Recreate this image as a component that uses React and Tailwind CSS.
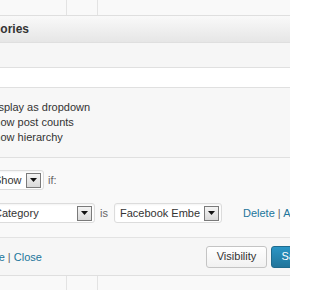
const font = { fontFamily: '"Liberation Sans", Arial, sans-serif' };

function Arrow() {
  return (
    <span className="flex h-[15px] w-[15px] shrink-0 items-center justify-center border border-[#7a7a7a] bg-gradient-to-b from-[#f4f4f4] to-[#d9d9d9]">
      <svg width="7" height="4" viewBox="0 0 7 4">
        <polygon points="0,0 7,0 3.5,4" fill="#111" />
      </svg>
    </span>
  );
}

function Select({ label, className = "" }) {
  return (
    <div
      className={`flex h-[20px] shrink-0 items-center justify-between rounded-[3px] border border-[#dcdcdc] bg-white pl-[5px] pr-[2px] text-[11px] text-[#333] shadow-[inset_0_1px_2px_rgba(0,0,0,0.05)] ${className}`}
    >
      <span className="whitespace-nowrap">{label}</span>
      <Arrow />
    </div>
  );
}

function Columns({ border }) {
  return (
    <div className={`flex h-[16px] ${border}`}>
      <div className="w-[67px] border-r border-[#e3e3e3]" />
      <div className="w-[31px] border-r border-[#e3e3e3]" />
    </div>
  );
}

export default function App() {
  return (
    <div className="relative h-[290px] w-[290px] overflow-hidden bg-[#f9f9f9] text-[#333]" style={font}>
      <Columns border="border-b border-[#dfdfdf]" />

      <div className="flex h-[27px] items-center border-b border-[#dfdfdf] bg-gradient-to-b from-[#f9f9f9] to-[#e6e6e6]">
        <h4 className="ml-[-33px] whitespace-nowrap text-[12px] font-bold text-[#333]">Categories</h4>
      </div>

      <div className="h-[25px] border-b border-[#e0e0e0] bg-[#f6f6f6]" />
      <div className="h-[20px] border-b border-[#e0e0e0] bg-white" />

      <div className="h-[70px] border-b border-[#e0e0e0] bg-[#f7f7f7] pt-[12px]">
        <ul className="ml-[-12px] text-[11px] leading-[15px] text-[#333]">
          <li className="whitespace-nowrap">Display as dropdown</li>
          <li className="ml-[-1px] whitespace-nowrap">Show post counts</li>
          <li className="ml-[-1px] whitespace-nowrap">Show hierarchy</li>
        </ul>
      </div>

      <div className="h-[80px] border-b border-[#e3e3e3] bg-[#f9f9f9] pt-[12px]">
        <div className="flex items-center">
          <Select label="Show" className="ml-[-12px] w-[56px]" />
          <span className="ml-[4px] text-[11px] text-[#666]">if:</span>
        </div>
        <div className="mt-[13px] flex items-center">
          <Select label="Category" className="ml-[-12px] w-[107px]" />
          <span className="ml-[5px] text-[11px] text-[#666]">is</span>
          <Select label="Facebook Embe" className="ml-[6px] w-[108px]" />
          <span className="ml-[21px] whitespace-nowrap text-[11px]">
            <a className="text-[#21759b]">Delete</a>
            <span className="text-[#666]"> | </span>
            <a className="text-[#21759b]">Add</a>
          </span>
        </div>
      </div>

      <div className="flex h-[38px] items-center border-b border-[#dfdfdf] bg-[#f6f6f6]">
        <span className="ml-[-27px] mt-[2px] w-[71px] shrink-0 whitespace-nowrap text-[11px]">
          <a className="text-[#21759b]">Delete</a>
          <span className="text-[#666]"> | </span>
          <a className="text-[#21759b]">Close</a>
        </span>
        <button className="ml-[162px] h-[22px] w-[61px] shrink-0 rounded-[3px] border border-[#c4c4c4] bg-gradient-to-b from-white to-[#f1f1f1] text-[11px] text-[#333]">
          Visibility
        </button>
        <button className="ml-[4px] h-[22px] w-[46px] shrink-0 rounded-[3px] border border-[#1e6a8d] bg-gradient-to-b from-[#2a95c5] to-[#21759b] text-[11px] text-white">
          Save
        </button>
      </div>

      <Columns border="" />
    </div>
  );
}
